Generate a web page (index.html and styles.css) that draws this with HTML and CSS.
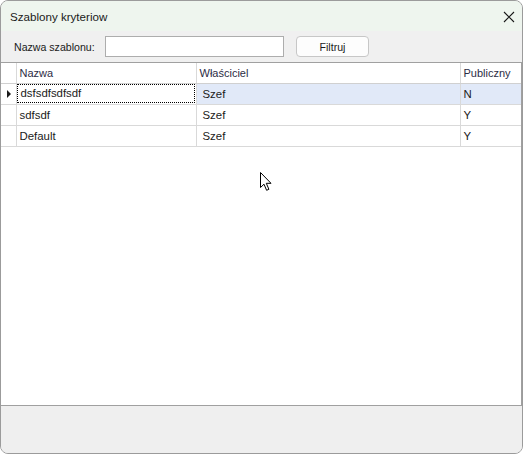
FILE: index.html
```
<!DOCTYPE html>
<html lang="pl">
<head>
  <meta charset="UTF-8" />
  <title>Szablony kryteriow</title>
  <link rel="stylesheet" href="styles.css">
</head>
<body>
  <div class="Window">
    <div class="TitleBar">
      <span class="Title">Szablony kryteriow</span>
      <svg class="Close" width="12" height="12" viewBox="0 0 12 12">
        <path d="M1 1 L11 11 M11 1 L1 11" stroke="#1a1a1a" stroke-width="1.1" fill="none"/>
      </svg>
    </div>

    <div class="Toolbar">
      <label class="Label" for="name">Nazwa szablonu:</label>
      <input class="Input" id="name" type="text">
      <button class="Button">Filtruj</button>
    </div>

    <div class="Grid">
      <table class="Table">
        <colgroup>
          <col class="c-head">
          <col class="c-name">
          <col class="c-owner">
          <col>
        </colgroup>
        <tr class="HeadRow">
          <th></th>
          <th>Nazwa</th>
          <th>Właściciel</th>
          <th>Publiczny</th>
        </tr>
        <tr class="Row selected">
          <td class="RowHead"><span class="Arrow"></span></td>
          <td class="focus"><span>dsfsdfsdfsdf</span></td>
          <td class="owner">Szef</td>
          <td>N</td>
        </tr>
        <tr class="Row">
          <td class="RowHead"></td>
          <td>sdfsdf</td>
          <td class="owner">Szef</td>
          <td>Y</td>
        </tr>
        <tr class="Row">
          <td class="RowHead"></td>
          <td>Default</td>
          <td class="owner">Szef</td>
          <td>Y</td>
        </tr>
      </table>
    </div>

    <div class="Footer"></div>

    <svg class="Cursor" width="13" height="20" viewBox="0 0 13 20">
      <path d="M0.5 0.5 L0.5 15.5 L4 12.2 L6.6 18.3 L8.9 17.3 L6.3 11.3 L11 11.3 Z" fill="#fff" stroke="#000" stroke-width="1"/>
    </svg>
  </div>
</body>
</html>
```

FILE: styles.css
```
* {
  margin: 0;
  padding: 0;
  box-sizing: border-box;
}

html, body {
  width: 523px;
  height: 454px;
  background: #ffffff;
  font-family: "Liberation Sans", Arial, sans-serif;
  color: #1a1a1a;
}

.Window {
  position: relative;
  display: flex;
  flex-direction: column;
  width: 523px;
  height: 454px;
  border: 1px solid #9b9b9b;
  border-radius: 8px;
  overflow: hidden;
  background: #f0f0f0;
}

.TitleBar {
  display: flex;
  align-items: center;
  justify-content: space-between;
  height: 30px;
  padding: 0 7px 0 9px;
  background: #eef5ee;
  flex-shrink: 0;
}

.Title {
  font-size: 11.6px;
  color: #1a1a1a;
}

.Close {
  margin-top: 1px;
}

.Toolbar {
  display: flex;
  align-items: center;
  height: 31px;
  padding: 0 0 0 13px;
  background: #f0f0f0;
  flex-shrink: 0;
}

.Label {
  font-size: 10.6px;
  color: #1a1a1a;
  width: 91px;
}

.Input {
  width: 179px;
  height: 21px;
  border: 1px solid #adadad;
  background: #fff;
  outline: none;
}

.Button {
  margin-left: 12px;
  width: 73px;
  height: 21px;
  border: 1px solid #c7c7c7;
  border-radius: 4px;
  background: #fdfdfd;
  font-family: "Liberation Sans", Arial, sans-serif;
  font-size: 10.6px;
  color: #1a1a1a;
}

.Grid {
  flex: 1;
  background: #fff;
  border-top: 1px solid #a0a0a0;
  border-bottom: 1px solid #a0a0a0;
  border-right: 1px solid #a0a0a0;
}

.Table {
  width: 100%;
  table-layout: fixed;
  border-collapse: collapse;
  font-size: 11.4px;
}

.c-head { width: 15px; }
.c-name { width: 180px; }
.c-owner { width: 264px; }

.Table th,
.Table td {
  height: 21px;
  padding: 0 0 0 3px;
  text-align: left;
  font-weight: normal;
  white-space: nowrap;
  overflow: hidden;
  border-right: 1px solid #d9d9d9;
  border-bottom: 1px solid #d9d9d9;
}

.Table tr .RowHead,
.HeadRow th:first-child {
  padding: 0;
}

.Table td:last-child,
.Table th:last-child {
  border-right: none;
}

.HeadRow th {
  height: 20px;
  background: #fff;
  color: #2c2c44;
  font-size: 11px;
  border-bottom: 1px solid #d0d0d0;
}

.Row td {
  padding-left: 3px;
}

.Row td.owner {
  padding-left: 6px;
}

.Row.selected td {
  background: #e1e9f8;
}

.Row.selected td.RowHead,
.Row.selected td.focus {
  background: #fff;
}

.Row td.focus {
  padding: 0 1px 0 0;
}

.focus span {
  display: block;
  height: 19px;
  line-height: 17px;
  padding-left: 3px;
  border: 1px dotted #000;
}

.Arrow {
  display: block;
  width: 0;
  height: 0;
  margin-left: 6px;
  border-top: 4px solid transparent;
  border-bottom: 4px solid transparent;
  border-left: 4px solid #1a1a1a;
}

.Footer {
  height: 47px;
  background: #efefef;
  flex-shrink: 0;
}

.Cursor {
  position: absolute;
  left: 259px;
  top: 171px;
}
```
